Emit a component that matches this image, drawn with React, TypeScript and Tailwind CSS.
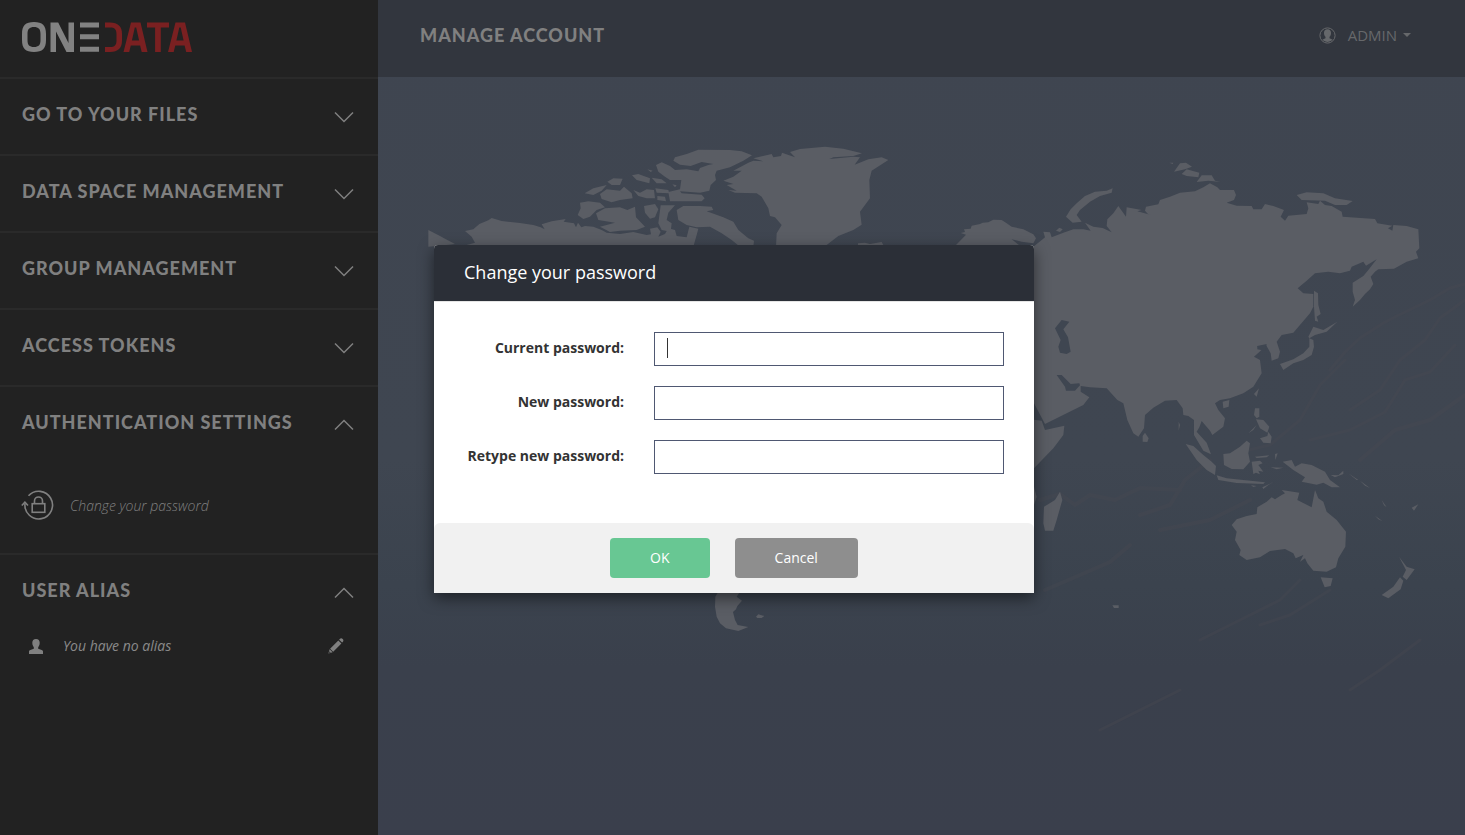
import { ReactNode } from "react";

const LAND = "#5a5d64";

function Logo() {
  return (
    <svg width="170" height="30" viewBox="0 0 170 30" role="img" aria-label="Onedata" fill="none">
      <g fill="#828282">
        <path fillRule="evenodd" d="M12 0c8.500 0 12 3.500 12 12v6c0 8.500-3.500 12-12 12S0 26.500 0 18v-6C0 3.500 3.500 0 12 0zm0 5c-4.600 0-6.500 2-6.500 7v6c0 5 1.900 7 6.500 7s6.500-2 6.500-7v-6c0-5-1.900-7-6.500-7z" />
        <path d="M28.500 30V.5h7.700l10.300 20.600V.5H52V30h-7.500L34 9.400V30z" />
        <path d="M58 .5h19v5H58zM58 12.300h19v5H58zM58 24.800h19v5H58z" />
      </g>
      <g fill="#7a2021">
        <path d="M83 .5h5c8 0 12 4 12 11.500v6.500C100 26 96 30 88 30h-5v-5h5c4.600 0 6.500-1.900 6.500-6.500V12c0-4.600-1.900-6.500-6.500-6.500h-5z" />
        <path fillRule="evenodd" d="M101.500 30 109 .5h9.500L125.500 30h-5.800l-1.600-6.600h-9.300L107.200 30zm8.400-11.600h7.200L114.200 5.500h-1.400z" />
        <path d="M125 .5h22v5h-8.200V30h-5.700V5.500H125z" />
        <path fillRule="evenodd" d="M146 30 153.500.5h9.500L170 30h-5.800l-1.600-6.600h-9.300L151.700 30zm8.400-11.600h7.200L158.700 5.500h-1.400z" />
      </g>
    </svg>
  );
}

function Chevron({ up = false }: { up?: boolean }) {
  return (
    <svg width="20" height="12" viewBox="0 0 20 12" fill="none" stroke="#808080" strokeWidth="1.5" aria-hidden="true">
      <path d={up ? "M1 10.500 10 1.500 19 10.500" : "M1 1.500 10 10.500 19 1.500"} />
    </svg>
  );
}

function PasswordIcon() {
  return (
    <svg width="34" height="32" viewBox="0 0 34 32" fill="none" stroke="#808080" strokeWidth="1.6" aria-hidden="true">
      <path d="M7.500 5.800A13.800 13.800 0 1 1 4 13.500" />
      <path d="M.8 15.500 3.900 12.200 7 15.500" />
      <rect x="11.200" y="13.700" width="12.600" height="8.600" />
      <path d="M13.500 13.500V11a4 4 0 0 1 8 0v2.500" />
    </svg>
  );
}

function PersonIcon() {
  return (
    <svg width="14" height="15" viewBox="0 0 14 15" fill="#808080" aria-hidden="true">
      <path d="M7 0c2.500 0 3.700 1.500 3.700 3.800 0 2-.7 3.400-1.500 4.400v1.600l3.500 1.100c.9.300 1.300.8 1.300 1.700V15H0v-2.400c0-.9.4-1.400 1.300-1.700l3.500-1.100V8.200C4 7.200 3.300 5.800 3.300 3.800 3.300 1.500 4.500 0 7 0z" />
    </svg>
  );
}

function PencilIcon() {
  return (
    <svg width="16" height="16" viewBox="0 0 16 16" fill="#808080" aria-hidden="true">
      <path d="M11.700 1.100c1-1 2-1 3-.1s.9 2 0 3l-.6.6-3-2.900zM10.300 2.500l3.100 3-8.200 8.200-3.100-3zM1.600 11.300l3 3L.4 15.600zM1.500 13.300l-.4 1.600 1.600-.5z" fillRule="evenodd" />
    </svg>
  );
}

function AccountIcon() {
  return (
    <svg width="17" height="17" viewBox="0 0 17 17" aria-hidden="true">
      <circle cx="8.500" cy="8.500" r="7.600" fill="none" stroke="#66686b" />
      <path fill="#66686b" d="M8.500 2.200c2.300 0 3.500 1.400 3.500 3.700 0 1.700-.6 3-1.500 3.900v1.500l3.200 1.500a7.500 7.500 0 0 1-10.400 0l3.200-1.500V9.800C5.600 8.900 5 7.600 5 5.900c0-2.300 1.200-3.700 3.500-3.700z" />
    </svg>
  );
}

function WorldMap() {
  return (
    <svg
      className="absolute inset-0 h-full w-full"
      viewBox="378 0 1087 835"
      preserveAspectRatio="xMidYMin slice"
      aria-hidden="true"
    >
      <defs>
        <linearGradient id="sea" x1="0" y1="0" x2="0" y2="1">
          <stop offset="0" stopColor="#3f4550" />
          <stop offset="0.550" stopColor="#3f4651" />
          <stop offset="0.700" stopColor="#3b434e" />
          <stop offset="0.800" stopColor="#3a404c" />
          <stop offset="1" stopColor="#3a3f4c" />
        </linearGradient>
      </defs>
      <rect x="378" y="0" width="1087" height="835" fill="url(#sea)" />
      <g fill="none" stroke="#4b4a52" strokeLinecap="round" strokeLinejoin="round" opacity="0.300">
        <path strokeWidth="3" d="M1465 284 1450 288 1430 300 1405 312 1385 322 1360 338 1345 352 1330 370M1465 300 1440 318 1425 340 1400 360 1380 390 1350 410M1455 345 1430 372 1405 380 1385 412 1350 430 1310 440M1345 360 1320 385 1300 420 1270 445 1240 452" />
        <path strokeWidth="4" d="M1465 395 1430 420 1395 430 1360 460M1210 460 1185 480 1170 505 1140 515M1180 490 1140 488 1115 500 1090 495 1075 505 1060 494 1040 500M1250 500 1210 520 1160 530M1130 545 1110 562 1080 575 1045 590" />
        <path strokeWidth="3" d="M1300 580 1280 600 1240 620 1200 640M1330 590 1290 615 1260 625M1180 690 1140 710 1100 730M1420 640 1380 670 1350 690" />
      </g>
      <g fill={LAND}>
        <g transform="translate(420 130) scale(0.33333)">
          <path d="M25 300 60 318 75 326 105 342 80 345 25 350z" />
          <path d="M135 303 160 298 178 282 205 271 215 264 245 273 300 279 340 285 362 292 374 298 365 283 395 274 437 267 431 275 462 280 468 292 474 278 484 292 495 288 520 290 545 300 560 308 600 312 640 306 680 315 693 313 690 296 712 292 722 305 715 320 735 312 745 295 765 300 770 318 800 322 808 290 835 296 830 315 820 350 120 350 165 338 155 320z" />
          <path d="M480 218 505 214 540 218 555 232 530 240 510 260 490 267 473 255 482 235z" />
          <path d="M555 235 600 232 622 240 645 230 648 262 675 290 650 300 600 302 570 306 540 290 585 278 535 270 528 250z" />
          <path d="M494 190 520 175 560 165 545 182 520 195z" />
          <path d="M562 155 580 145 608 146 600 165 575 165z" />
          <path d="M540 192 560 178 600 182 612 170 635 190 638 205 600 210 575 217 545 207z" />
          <path d="M636 136 655 132 690 145 688 160 650 150zM695 143 725 148 740 160 710 160zM682 118 698 122 692 126zM757 163 770 166 765 172z" />
          <path d="M640 180 660 188 680 178 702 180 705 205 680 205 655 198zM706 175 745 180 748 190 710 188zM712 198 735 200 738 214 712 210z" />
          <path d="M708 105 725 97 750 108 765 120 800 118 835 124 840 114 865 105 880 102 845 96 812 108 780 104 760 92 765 82 800 72 835 59 930 60 965 64 996 76 970 92 930 112 890 122 885 135 888 150 872 165 868 182 840 188 780 184 785 190 845 194 854 205 845 214 750 214 745 186 780 178 784 150 750 150 735 140 715 125z" />
          <path d="M672 228 705 222 715 238 705 262 690 266 675 248z" />
          <path d="M722 226 765 226 745 248 740 270 755 280 752 305 725 300 715 280z" />
          <path d="M770 240 790 228 840 228 875 230 880 240 860 244 910 262 940 275 955 300 985 325 1002 332 1000 350 960 350 935 330 905 310 870 290 830 292 800 285 775 270z" />
          <path d="M910 152 940 140 965 122 940 122 985 98 1000 92 1030 94 1000 85 1055 72 1060 82 1083 78 1086 68 1125 82 1110 66 1140 57 1215 50 1270 56 1326 70 1300 78 1240 82 1228 87 1300 80 1320 82 1304 104 1345 88 1385 82 1405 90 1355 122 1348 150 1350 205 1320 245 1325 284 1300 300 1255 318 1220 345 1068 350 1070 310 1085 285 1065 262 1050 258 1045 235 1025 200 1010 190 945 188 925 180 950 182 920 165 940 162z" />
          <path d="M1314 340 1335 338 1350 342 1385 336 1390 345 1314 350z" />
        </g>
        <path
          transform="translate(900 200) scale(0.33333)"
          d="M160 145 168 135 198 104 182 99 195 96 192 88 212 86 215 77 240 72 248 68 265 67 280 59 305 60 320 70 335 80 370 88 400 103 408 115 400 130 365 125 335 118 358 136 350 150z"
        />
        <g transform="translate(1030 150) scale(0.33333)">
          <path d="M-60 300 10 290 38 268 45 262 40 245 60 247 65 262 100 248 130 238 160 238 182 242 165 218 190 230 218 234 245 247 230 228 232 208 250 190 265 168 288 200 290 172 335 180 322 184 366 196 368 208 345 182 348 170 385 163 390 150 420 140 450 128 495 124 520 112 540 100 562 112 570 120 612 120 618 135 612 150 590 158 620 167 665 168 670 178 695 178 705 162 730 168 762 180 752 200 765 212 775 197 830 192 835 175 830 157 865 162 870 152 885 165 905 168 935 185 938 200 1035 207 1042 220 1087 227 1074 235 1087 242 1090 225 1130 228 1165 238 1168 295 1158 305 1165 325 1130 335 1092 356 1045 358 1035 365 1022 380 1030 402 1020 418 1005 432 990 450 968 470 975 450 968 425 968 398 1000 378 1015 360 1040 328 1008 347 1000 335 965 350 960 362 930 370 895 365 855 370 830 392 803 415 820 430 850 432 850 470 840 490 790 548 755 555 740 575 750 605 745 625 725 632 722 610 708 585 680 590 697 598 672 620 690 630 695 670 670 710 640 730 600 745 570 750 555 760 565 780 585 805 580 830 547 855 540 842 515 813 508 832 500 845 530 878 543 913 520 902 492 855 492 810 475 798 460 795 458 775 440 750 405 752 370 773 345 795 342 835 325 860 310 850 292 810 280 760 262 750 230 715 180 712 152 708 152 725 178 742 160 765 110 790 45 822 12 760 -60 700z" />
          <path d="M-60 800 35 812 45 840 103 827 100 855 70 895 12 955 -60 980z" />
          <path d="M248 115 245 128 210 138 180 155 150 180 140 195 155 215 128 218 108 200 122 178 140 160 165 138 195 125 230 122zM78 242 88 233 98 238 90 246z" />
          <path d="M418 38 430 38 428 42zM432 65 450 40 468 38 486 50 465 58zM455 72 470 58 508 68 505 82 470 78zM500 96 515 76 545 76 555 92 573 96 535 92z" />
          <path d="M800 135 830 127 880 130 915 145 968 153 950 165 915 165 885 152 815 150z" />
          <path d="M852 422 864 430 865 465 872 492 860 500 865 515 855 512 852 470zM835 560 850 530 880 540 922 515 890 545 855 555 838 565zM838 565 850 570 852 590 845 615 820 630 790 640 760 660 750 642 790 628 820 610 838 590z" />
          <path d="M672 732 687 715 680 740zM578 755 598 750 596 770 580 775zM338 858 345 848 356 865 352 876 338 875zM446 815 450 825 446 842z" />
          <path d="M467 882 490 888 520 915 545 935 558 948 555 975 530 960 500 930zM580 912 600 910 630 890 650 872 660 880 655 910 660 935 640 958 605 957 582 945z" />
          <path d="M560 976 590 985 640 990 705 997 700 1002 620 999 565 990zM665 935 690 932 698 940 685 945 700 965 685 962 690 973 678 968 670 972zM675 920 718 916 710 922 680 924zM735 912 743 910 736 930zM697 1012 730 996 715 1005 700 1017zM722 952 760 953 740 958zM663 1006 680 1008 670 1011z" />
          <path d="M675 775 688 775 688 800 680 805 672 795zM678 808 700 810 718 830 712 848 690 835zM690 865 712 858 715 845 725 860 722 880 700 878zM655 850 680 825 670 840z" />
          <path d="M758 935 785 930 795 950 815 940 845 945 885 965 900 990 930 1012 905 1012 880 998 860 1004 815 995 825 982 790 960zM902 975 925 976 940 962 940 972 915 982zM955 970 985 990 980 990zM990 992 1020 1014 1005 1007zM1055 1050 1070 1072 1062 1066zM1035 1097 1058 1114 1045 1108zM1145 1073 1165 1063 1152 1082z" />
          <path d="M605 1125 620 1108 650 1098 680 1092 682 1072 710 1055 725 1042 735 1048 755 1035 765 1030 755 1020 808 1028 802 1050 845 1072 855 1020 865 1045 880 1055 890 1085 920 1110 948 1145 946 1190 925 1225 918 1252 890 1265 850 1262 832 1240 825 1225 810 1235 820 1215 797 1225 790 1210 765 1197 720 1203 690 1222 650 1230 628 1215 632 1200 615 1170 620 1145z" />
          <path d="M872 1282 908 1285 902 1308 884 1312zM1107 1220 1130 1250 1154 1258 1130 1290 1118 1280 1128 1260zM1110 1282 1120 1292 1112 1318 1075 1345 1055 1335 1090 1310zM247 1366 266 1366 266 1374 252 1374z" />
          <path d="M42 1070 75 1050 90 1025 97 1050 80 1110 70 1142 45 1142 40 1120zM12 1010 20 1040 12 1065z" />
        </g>
        <path
          transform="translate(370 560) scale(0.33333)"
          d="M1045 95 1110 95 1100 110 1116 122 1102 138 1098 148 1089 156 1095 180 1103 195 1135 201 1105 213 1068 205 1050 190 1040 170 1035 140 1036 110zM1158 170 1165 163 1183 168 1175 174 1162 174z"
        />
      </g>
      <g fill="#3f4651" transform="translate(1030 150) scale(0.33333)">
        <path d="M75 535 95 510 118 515 100 538 114 562 122 605 110 612 90 608 85 590 92 570z" />
        <path d="M80 675 95 675 122 702 148 700 150 706 135 722 108 722 105 710z" />
        <path d="M682 588 710 582 705 602 682 598z" />
      </g>
    </svg>
  );
}

function Section({ title, open = false, last = false, children }: { title: string; open?: boolean; last?: boolean; children?: ReactNode }) {
  return (
    <section className={last ? "" : "border-b-2 border-[#2a2a2a]"}>
      <button type="button" aria-expanded={open} className="flex h-[75px] w-full items-center justify-between pr-6 pl-[22px] text-left">
        <span className="pb-1.5 font-['Lato','Open_Sans',sans-serif] text-lg font-black tracking-[1px] text-[#808080] uppercase">{title}</span>
        <Chevron up={open} />
      </button>
      {children}
    </section>
  );
}

function PasswordField({ id, label, focused = false }: { id: string; label: string; focused?: boolean }) {
  return (
    <div className="flex items-center gap-[30px]">
      <label htmlFor={id} className="w-40 pb-0.5 text-right text-sm font-bold whitespace-nowrap text-[#333333]">
        {label}
      </label>
      <div className="relative flex min-w-0 flex-1">
        <input
          id={id}
          type="password"
          autoFocus={focused}
          className="h-[34px] w-full border border-[#4f5872] bg-white px-3 text-sm text-[#333333] caret-transparent outline-none"
        />
        {focused && <span className="pointer-events-none absolute top-[6px] left-[13px] h-5 w-px bg-[#333333]" />}
      </div>
    </div>
  );
}

export default function App() {
  return (
    <div className="relative flex min-h-screen bg-[#3f4550] font-['Open_Sans','Noto_Sans',sans-serif]">
      <aside className="w-[378px] shrink-0 bg-[#222222]">
        <div className="flex h-[79px] items-start border-b-2 border-[#2a2a2a] pt-[22px] pl-[22px]">
          <Logo />
        </div>
        <nav>
          <Section title="Go to your files" />
          <Section title="Data space management" />
          <Section title="Group management" />
          <Section title="Access tokens" />
          <Section title="Authentication settings" open>
            <a href="#password" className="flex h-[91px] items-start gap-[15px] pt-7 pl-[21px] text-sm leading-8 font-light text-[#808080] italic">
              <PasswordIcon />
              Change your password
            </a>
          </Section>
          <Section title="User alias" open last>
            <div className="flex items-center pt-[6px] pr-[34px] pl-[29px] text-sm text-[#8a8a8a] italic">
              <PersonIcon />
              <span className="flex-1 pl-5">You have no alias</span>
              <button type="button" aria-label="Edit alias">
                <PencilIcon />
              </button>
            </div>
          </Section>
        </nav>
      </aside>

      <main className="relative min-w-0 flex-1">
        <WorldMap />
        <header className="relative flex h-[77px] items-start justify-between bg-[#32363e] pt-[21px] pr-[54px] pl-[42px]">
          <h1 className="font-['Lato','Open_Sans',sans-serif] text-lg leading-7 font-black tracking-[1px] text-[#808080] uppercase">Manage account</h1>
          <button type="button" className="flex items-center text-[15px] leading-7 text-[#66686b]">
            <AccountIcon />
            <span className="pl-3">ADMIN</span>
            <span className="ml-[6px] border-x-4 border-t-4 border-x-transparent border-t-[#66686b]" />
          </button>
        </header>
      </main>

      <div className="absolute inset-0 flex items-start justify-center pt-[245px]">
        <form role="dialog" aria-labelledby="dialog-title" className="ml-[3px] w-[600px] rounded-t bg-white shadow-[0_5px_15px_rgba(0,0,0,0.5)]">
          <h2 id="dialog-title" className="h-14 rounded-t bg-[#2b2f37] px-[30px] text-lg leading-[54px] text-white">
            Change your password
          </h2>
          <div className="flex flex-col gap-5 border-t border-[#e5e5e5] px-[30px] pt-[30px] pb-[49px]">
            <PasswordField id="current" label="Current password:" focused />
            <PasswordField id="new" label="New password:" />
            <PasswordField id="retype" label="Retype new password:" />
          </div>
          <div className="flex justify-center gap-[25px] rounded-t-md bg-[#f1f1f1] py-[15px]">
            <button type="submit" className="h-10 rounded bg-[#68c793] px-10 text-sm text-white">
              OK
            </button>
            <button type="button" className="h-10 rounded bg-[#8e8e8e] px-10 text-sm text-white">
              Cancel
            </button>
          </div>
        </form>
      </div>
    </div>
  );
}
